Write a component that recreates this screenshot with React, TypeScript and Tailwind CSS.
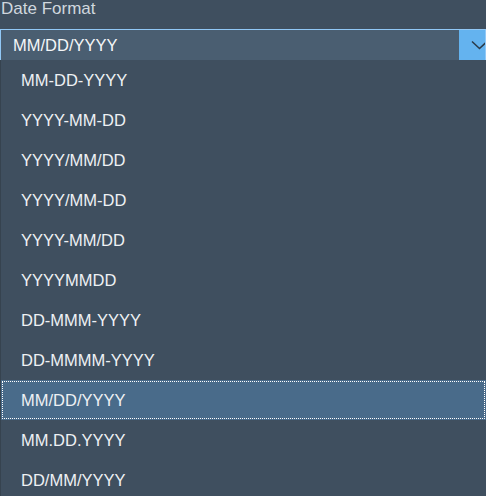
const formats = [
  "MM-DD-YYYY",
  "YYYY-MM-DD",
  "YYYY/MM/DD",
  "YYYY/MM-DD",
  "YYYY-MM/DD",
  "YYYYMMDD",
  "DD-MMM-YYYY",
  "DD-MMMM-YYYY",
  "MM/DD/YYYY",
  "MM.DD.YYYY",
  "DD/MM/YYYY",
];

export default function App() {
  const selected = "MM/DD/YYYY";

  return (
    <div className="relative h-[496px] w-[486px] overflow-hidden bg-[#3f4f5f] font-['Liberation_Sans',Arial,sans-serif]">
      <label className="block h-[29px] pl-[1px] text-[17px] leading-[18px] text-[#d0d7de]">
        Date Format
      </label>

      {/* select box */}
      <div className="flex h-[32px] border border-[#91c8f6] bg-[#4a5e71]">
        <div className="flex flex-1 items-center pl-[12px] text-[16.5px] text-[#f4f6f8]">
          {selected}
        </div>
        <div className="flex w-[26px] items-center overflow-hidden bg-[#64b3ef] pl-[12px]">
          <svg width="18" height="10" viewBox="0 0 18 10" fill="none" className="shrink-0">
            <path d="M1 1.5l7.5 7 7.5-7" stroke="#2b3a48" strokeWidth="1.5" />
          </svg>
        </div>
      </div>

      {/* open list */}
      <ul className="absolute left-0 right-0 top-[60px] border-l border-[#36434f] bg-[#3f4f5f]">
        {formats.map((f) => (
          <li
            key={f}
            className={`flex h-[40px] items-center px-[20px] text-[16.5px] text-[#eef1f4] ${
              f === selected
                ? "bg-[#496b8a] outline-1 outline-dotted outline-white -outline-offset-[2px]"
                : ""
            }`}
          >
            {f}
          </li>
        ))}
      </ul>
    </div>
  );
}
